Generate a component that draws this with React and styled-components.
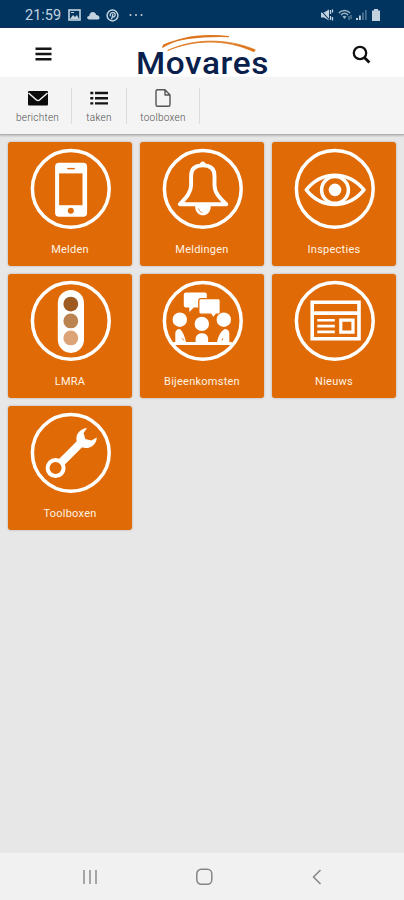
import styled, { createGlobalStyle } from 'styled-components';

const GlobalStyle = createGlobalStyle`
  * {
    box-sizing: border-box;
  }

  body {
    margin: 0;
    background-color: #e7e7e7;
    font-family: Roboto, sans-serif;
  }

  svg {
    display: block;
    flex: none;
  }
`;

const Screen = styled.div`
  display: flex;
  flex-direction: column;
  width: 404px;
  height: 900px;
  overflow: hidden;
  background-color: #e7e7e7;
`;

const StatusBar = styled.div`
  display: flex;
  align-items: center;
  height: 28px;
  padding: 3px 23px 0 25px;
  background-color: #01355f;
  border-bottom: 1px solid #13295a;
  color: #c3d2df;
`;

const Clock = styled.div`
  width: 43px;
  font-size: 14.5px;
`;

const StatusGroup = styled.div`
  display: flex;
  align-items: center;
  gap: ${(props) => props.$gap};
  margin-left: ${(props) => (props.$end ? 'auto' : '0')};
`;

const Header = styled.header`
  display: flex;
  justify-content: space-between;
  height: 49px;
  padding: 0 33px 0 35px;
  background-color: #fff;
`;

const IconButton = styled.div`
  display: flex;
  align-items: center;
  height: 52px;
  cursor: pointer;
`;

const LogoSvg = styled.svg`
  overflow: visible;
`;

const Toolbar = styled.nav`
  display: flex;
  align-items: center;
  height: 58px;
  padding: 1px 0 0 4px;
  background-color: #f4f4f4;
  border-bottom: 1px solid #b0b0b0;
  box-shadow: 0 1px 2px rgba(0, 0, 0, 0.2);
`;

const ToolbarItem = styled.div`
  display: flex;
  flex-direction: column;
  align-items: center;
  justify-content: space-between;
  width: ${(props) => props.$width}px;
  height: 36px;
  border-right: 1px solid #dcdcdc;
  color: #4d4d4d;
  font-size: 10px;
  font-weight: 300;
  letter-spacing: 0.25px;
  line-height: 13px;
  cursor: pointer;
`;

const Grid = styled.main`
  display: grid;
  grid-template-columns: repeat(3, 124px);
  grid-auto-rows: 124px;
  gap: 8px;
  flex: 1;
  align-content: start;
  padding: 7px 8px;
`;

const TileBox = styled.div`
  display: flex;
  flex-direction: column;
  align-items: center;
  padding-top: 5px;
  border-radius: 3px;
  background-color: #e06a05;
  box-shadow: 0 0 2px rgba(120, 90, 70, 0.5);
  cursor: pointer;
`;

const TileLabel = styled.div`
  margin-top: 12px;
  color: #fff3e4;
  font-size: 11px;
  line-height: 14px;
  letter-spacing: 0.25px;
`;

const NavBar = styled.footer`
  display: flex;
  align-items: center;
  justify-content: space-between;
  height: 47px;
  padding: 0 82px 0 82px;
  background-color: #f1f1f1;
`;

const Logo = () => (
  <LogoSvg width="136" height="49" viewBox="0 0 136 49" fill="none">
    <path d="M29 19C44 9.5 66 5.5 95 8.6C66 7.8 46 10.3 29.6 17Z" fill="#dd761c" stroke="#dd761c" strokeWidth="1.2" />
    <path d="M33.7 22.5C60 11.5 92 10.5 120 23.8L121.2 21.8C92 9.8 59 10.5 33.7 22.5Z" fill="#dd761c" stroke="#dd761c" strokeWidth="0.8" />
    <text
      x="2"
      y="45.5"
      textLength="133"
      lengthAdjust="spacingAndGlyphs"
      fontFamily="Roboto, sans-serif"
      fontSize="32"
      fontWeight="500"
      letterSpacing="0.6"
      fill="#08204b"
    >
      Movares
    </text>
  </LogoSvg>
);

const PhoneArt = () => (
  <>
    <rect x="26.3" y="15.8" width="32" height="54" rx="4" fill="#fff" />
    <path d="M30.3 26.5h23.4v31.8H30.3z" fill="#e06a05" />
    <circle cx="42" cy="63.8" r="3" fill="#e06a05" />
    <path d="M38.5 21.7h7.5" stroke="#e06a05" strokeWidth="1.4" />
  </>
);

const BellArt = () => (
  <>
    <path d="M38.5 19C39 13 45 13 45.5 19Z" fill="#fff" />
    <path
      d="M42 18.5C34 18.5 30.3 22.5 30.3 29V38C30.3 46 25 51 19 57.3H65.5C59 51 53.7 46 53.7 38V29C53.7 22.5 50 18.5 42 18.5Z"
      stroke="#fff"
      strokeWidth="3.9"
      strokeLinejoin="round"
    />
    <path d="M34.3 59H50C50 71.5 34.3 71.5 34.3 59Z" fill="#fff" />
    <path d="M37.5 61.5C38.5 64 39.5 65 41.5 65.7" stroke="#e8954d" strokeWidth="1" />
  </>
);

const EyeArt = () => (
  <>
    <path d="M13.5 43C29 23.5 55 23.5 71.2 43C55 62.5 29 62.5 13.5 43Z" stroke="#fff" strokeWidth="3.5" strokeLinejoin="round" />
    <circle cx="42.2" cy="43" r="13.4" stroke="#fff" strokeWidth="3.5" />
    <circle cx="42.2" cy="43" r="6.3" fill="#fff" />
  </>
);

const TrafficLightArt = () => (
  <>
    <rect x="29" y="11" width="26.2" height="63" rx="13.1" fill="#fff" />
    <circle cx="42" cy="25.2" r="7.4" fill="#9d5b22" />
    <circle cx="42" cy="42" r="7.4" fill="#bb8350" />
    <circle cx="42" cy="59" r="7.4" fill="#dca377" />
  </>
);

const MeetingArt = () => (
  <>
    <path d="M25 13.5H44Q46 13.5 46 15.5V26.5Q46 28.5 44 28.5H33L28.5 33V28.5H25Q23 28.5 23 26.5V15.5Q23 13.5 25 13.5Z" fill="#fff" />
    <path
      d="M40 19.8H57.5Q59.5 19.8 59.5 21.8V33.3Q59.5 35.3 57.5 35.3H55.5L52.5 39L50 35.3H40Q38 35.3 38 33.3V21.8Q38 19.8 40 19.8Z"
      fill="#fff"
      stroke="#e06a05"
      strokeWidth="1.3"
    />
    <circle cx="19" cy="40.8" r="7.2" fill="#fff" />
    <circle cx="41" cy="45" r="7.2" fill="#fff" />
    <circle cx="63" cy="40.8" r="7.2" fill="#fff" />
    <path d="M14.5 65V54Q15 50 19 50Q23 53 25.5 64V65Z" fill="#fff" />
    <path d="M68.5 65V54Q68 50 64 50Q58 53 56 64V65Z" fill="#fff" />
    <path d="M34.8 65V59Q36 54.3 41 54.3Q46.5 54.3 47.3 59V65Z" fill="#fff" />
    <path d="M21.5 59.5l1.5 2M62 59.5l-.8 2" stroke="#e06a05" />
    <path d="M12.5 64.5H71" stroke="#fff" strokeWidth="3" />
  </>
);

const NewsArt = () => (
  <>
    <path d="M19.4 23.4H66.2V59.8H19.4ZM19.4 34.2H66.2" stroke="#fff" strokeWidth="3.6" />
    <path d="M24.5 41.3H42M24.5 47.2H42M24.5 53H42" stroke="#fff" strokeWidth="2.6" />
    <path d="M48 41.2H60.2V53.2H48Z" stroke="#fff" strokeWidth="3.2" />
  </>
);

const WrenchArt = () => (
  <>
    <circle cx="26.8" cy="57.2" r="8" stroke="#fff" strokeWidth="4" />
    <path d="M32.5 51.5L52 32" stroke="#fff" strokeWidth="8" />
    <path
      d="M58.3 17C50 18 46 24.5 48.2 31L52.5 36C59 39 67.5 35.5 68 26.5L62.5 29.7L56.5 28L54.8 22Z"
      fill="#fff"
    />
  </>
);

const tiles = [
  { label: 'Melden', Art: PhoneArt },
  { label: 'Meldingen', Art: BellArt },
  { label: 'Inspecties', Art: EyeArt },
  { label: 'LMRA', Art: TrafficLightArt },
  { label: 'Bijeenkomsten', Art: MeetingArt },
  { label: 'Nieuws', Art: NewsArt },
  { label: 'Toolboxen', Art: WrenchArt },
];

const Tile = ({ label, Art }) => (
  <TileBox>
    <svg width="84" height="84" viewBox="-0.8 0.1 84 84" fill="none">
      <circle cx="42" cy="42" r="38.4" stroke="#fff" strokeWidth="3.5" />
      <Art />
    </svg>
    <TileLabel>{label}</TileLabel>
  </TileBox>
);

const App = () => {
  return (
    <>
      <GlobalStyle />
      <Screen>
        <StatusBar>
          <Clock>21:59</Clock>
          <StatusGroup $gap="6px">
            <svg width="13" height="12" viewBox="0 0 13 12" fill="none">
              <rect x="1" y="1" width="11" height="10" stroke="currentColor" strokeWidth="1.6" />
              <path d="M2 10l3-4 2 2 2-2 2 4z" fill="currentColor" />
              <path d="M3 3.5h3" stroke="currentColor" />
            </svg>
            <svg width="13" height="9" viewBox="0 0 13 9" fill="currentColor">
              <path d="M2 8.5C-.7 8-.2 5 2.2 5 2.5.6 8-.5 9.2 4c2.7-.4 4.8 3.5 2 4.5z" />
            </svg>
            <svg width="13" height="13" viewBox="0 0 13 13" fill="none">
              <circle cx="6.5" cy="6.5" r="5.4" stroke="currentColor" strokeWidth="1.5" />
              <path d="M5.5 10.5L7 5M4.4 7.2C3 3.5 9.2 2.2 9.2 5.5c0 2.5-2.2 3-2.7 2" stroke="currentColor" strokeWidth="1.3" />
            </svg>
            <svg width="23" height="4" viewBox="0 0 23 4" fill="currentColor">
              <circle cx="5.5" cy="2" r="1" />
              <circle cx="11" cy="2" r="1" />
              <circle cx="16.5" cy="2" r="1" />
            </svg>
          </StatusGroup>
          <StatusGroup $gap="4px" $end>
            <svg width="14" height="12" viewBox="0 0 14 12" fill="none">
              <path d="M1 3.5h3l5-3v11L4 8.500H1z" fill="currentColor" />
              <path d="M.5 1l9 10" stroke="#01355f" strokeWidth="1.1" />
              <path d="M10.5 1v4M12.5 .5v3M10.5 7v4M12.5 8v3.500" stroke="currentColor" strokeWidth="1.3" />
            </svg>
            <svg width="14" height="12" viewBox="0 0 14 12" fill="none" opacity="0.8">
              <path d="M.8 4C4 .5 9 .5 12 4M3 6c2.2-2.3 5-2.3 7 0" stroke="currentColor" strokeWidth="1.5" />
              <path d="M4.5 7.5Q6.500 6 8.500 7.500L6.500 10z" fill="currentColor" />
              <path d="M11 7v4M13 6v4" stroke="currentColor" strokeWidth="0.8" />
            </svg>
            <svg width="11" height="12" viewBox="0 0 11 12" fill="currentColor">
              <path d="M0 9h2v2H0zM3 6.5h1.8V11H3z" />
              <path d="M6 3.5h1.8V11H6zM9 1h1.6v10H9z" opacity="0.4" />
            </svg>
            <svg width="10" height="12" viewBox="0 0 10 12" fill="currentColor">
              <path d="M1 1.500h2V0h4v1.500h2V12H1z" />
            </svg>
          </StatusGroup>
        </StatusBar>

        <Header>
          <IconButton>
            <svg width="17" height="14" viewBox="0 0 17 14" stroke="#151515" strokeWidth="2.4">
              <path d="M.5 1.8h16M.5 7h16M.5 12.2h16" />
            </svg>
          </IconButton>
          <Logo />
          <IconButton>
            <svg width="19" height="19" viewBox="0 0 19 19" fill="none" stroke="#111">
              <circle cx="8" cy="8" r="6.2" strokeWidth="2.3" />
              <path d="M12.4 12.4l5 5" strokeWidth="2.8" />
            </svg>
          </IconButton>
        </Header>

        <Toolbar>
          <ToolbarItem $width={68}>
            <svg width="20" height="20" viewBox="0 0 20 20">
              <path d="M0 4Q0 3 1 3H19Q20 3 20 4V16Q20 17.5 19 17.5H1Q0 17.5 0 16Z" fill="#0b0b0b" />
              <path d="M.5 5L8.5 12Q10 13.2 11.5 12L19.5 5" fill="none" stroke="#f4f4f4" strokeWidth="1.5" />
            </svg>
            berichten
          </ToolbarItem>
          <ToolbarItem $width={55}>
            <svg width="18" height="20" viewBox="0 0 18 20" stroke="#151515" strokeWidth="2.4">
              <path d="M.3 5h3M5 5h13M.3 10.2h3M5 10.2h13M.3 15.4h3M5 15.4h13" />
            </svg>
            taken
          </ToolbarItem>
          <ToolbarItem $width={73}>
            <svg width="18" height="20" viewBox="0 0 18 20" fill="none" stroke="#555" strokeWidth="1.4">
              <path d="M3.5 1.8H11L16 7V16.5Q16 18.3 14.5 18.3H3.5Q2 18.3 2 16.5V3Q2 1.8 3.5 1.8M11 1.8V7H16" strokeLinejoin="round" />
            </svg>
            toolboxen
          </ToolbarItem>
        </Toolbar>

        <Grid>
          {tiles.map((tile) => (
            <Tile key={tile.label} label={tile.label} Art={tile.Art} />
          ))}
        </Grid>

        <NavBar>
          <svg width="16" height="16" viewBox="0 0 16 16" stroke="#8c8c8c" strokeWidth="1.5">
            <path d="M2 1v14M8 1v14M14 1v14" />
          </svg>
          <svg width="18" height="18" viewBox="0 0 18 18" fill="none" stroke="#858585" strokeWidth="1.5">
            <rect x="0.8" y="1.3" width="15" height="15" rx="4.5" />
          </svg>
          <svg width="10" height="16" viewBox="0 0 10 16" fill="none" stroke="#858585" strokeWidth="1.5">
            <path d="M8.5 1L1.5 8l7 7" />
          </svg>
        </NavBar>
      </Screen>
    </>
  );
};

export default App;
